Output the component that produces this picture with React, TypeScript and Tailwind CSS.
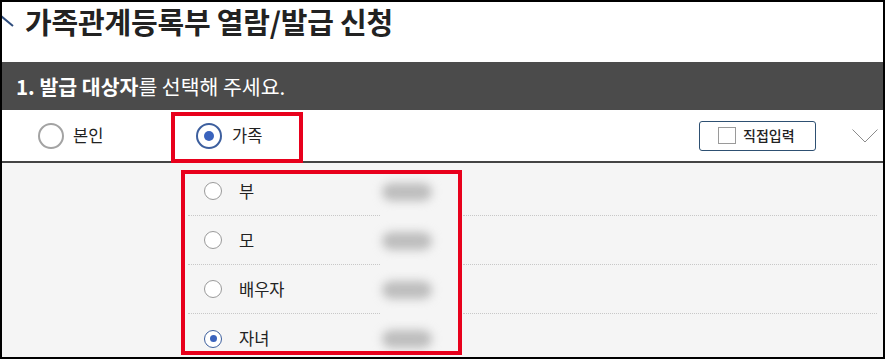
import React from 'react';

const font = { fontFamily: '"Noto Sans CJK KR", "Noto Sans", sans-serif' };

interface Member {
  id: string;
  label: string;
  checked: boolean;
}

const members: Member[] = [
  { id: 'father', label: '부', checked: false },
  { id: 'mother', label: '모', checked: false },
  { id: 'spouse', label: '배우자', checked: false },
  { id: 'child', label: '자녀', checked: true },
];

function BigRadio({ checked }: { checked: boolean }) {
  return (
    <span
      className={`w-[26px] h-[26px] rounded-full border-2 bg-white flex items-center justify-center shrink-0 ${
        checked ? 'border-[#3d5f9e]' : 'border-[#a3a3a3]'
      }`}
    >
      {checked && <span className="w-[10px] h-[10px] rounded-full bg-[#3a63bd]" />}
    </span>
  );
}

function SmallRadio({ checked }: { checked: boolean }) {
  return (
    <span
      className={`w-[18px] h-[18px] rounded-full border-[1.5px] bg-white flex items-center justify-center shrink-0 ${
        checked ? 'border-[#3d5f9e]' : 'border-[#9a9a9a]'
      }`}
    >
      {checked && <span className="w-[7px] h-[7px] rounded-full bg-[#3a63bd]" />}
    </span>
  );
}

export default function App() {
  return (
    <div
      className="relative w-[885px] h-[359px] border-2 border-black bg-white overflow-hidden text-[#222]"
      style={font}
    >
      {/* Page title */}
      <div className="h-[60px] flex items-start">
        <svg className="mt-[13px] shrink-0" width="13" height="13" viewBox="0 0 13 13">
          <line x1="-1" y1="1" x2="11" y2="11" stroke="#2f4d7d" strokeWidth="2" />
        </svg>
        <h1 className="ml-[10px] text-[29px] leading-[38px] font-bold tracking-[-0.2px]">
          가족관계등록부 열람/발급 신청
        </h1>
      </div>

      {/* Step header */}
      <div className="h-[48px] bg-[#4b4b4b] flex items-center px-[14px] text-white text-[20.5px]">
        <span className="font-bold">1. 발급 대상자</span>
        <span>를 선택해 주세요.</span>
      </div>

      {/* Target selection */}
      <div className="h-[53px] border-b-2 border-[#444] flex items-center pl-[36px]">
        <label className="w-[158px] flex items-center gap-[9px] text-[16.5px]">
          <BigRadio checked={false} />
          <span>본인</span>
        </label>
        <label className="flex items-center gap-[10px] text-[16.5px]">
          <BigRadio checked />
          <span>가족</span>
        </label>
        <button className="ml-auto h-[30px] w-[117px] border-[1.5px] border-[#2e5072] rounded-[3px] flex items-center pl-[18px] gap-[7px] bg-white">
          <span className="w-[18px] h-[17px] border border-[#9a9a9a] bg-white" />
          <span className="text-[14px] font-medium">직접입력</span>
        </button>
        <svg className="ml-[36px] mr-[5px]" width="26" height="14" viewBox="0 0 26 14">
          <polyline points="0.5,0.5 13,13 25.5,0.5" fill="none" stroke="#8c8c8c" strokeWidth="1" />
        </svg>
      </div>

      {/* Family member list */}
      <div className="h-[194px] bg-[#f5f5f5] pt-[4px] pl-[186px] pr-[6px]">
        {members.map((m, i) => {
          const border = i < members.length - 1 ? 'border-b border-dotted border-[#c8c8c8]' : '';
          return (
            <div key={m.id} className="h-[49px] flex items-stretch">
              <div className={`w-[192px] flex items-center pl-[16px] gap-[17px] text-[16.5px] ${border}`}>
                <SmallRadio checked={m.checked} />
                <span>{m.label}</span>
              </div>
              <div className="w-[83px] flex items-center pl-[2px]">
                <div className="w-[50px] h-[18px] rounded-full bg-[#bdbdbd] blur-[5px]" />
              </div>
              <div className={`flex-1 ${border}`} />
            </div>
          );
        })}
      </div>

      {/* Annotation boxes */}
      <div className="absolute left-[169px] top-[110px] w-[132px] h-[51px] border-4 border-[#e8001c]" />
      <div className="absolute left-[179px] top-[168px] w-[281px] h-[185px] border-4 border-[#e8001c]" />
    </div>
  );
}
